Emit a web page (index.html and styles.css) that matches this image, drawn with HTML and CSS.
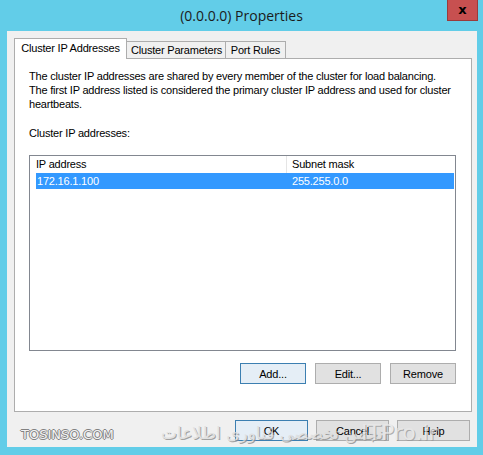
FILE: index.html
```html
<!DOCTYPE html>
<html lang="en">
<head>
    <meta charset="UTF-8">
    <title>(0.0.0.0) Properties</title>
    <link rel="stylesheet" href="styles.css">
</head>
<body>
    <div class="window">
        <!-- Titelbalk -->
        <div class="titlebar">
            <span></span>
            <div class="title">(0.0.0.0) Properties</div>
            <button class="close-btn">x</button>
        </div>

        <div class="client">
            <!-- Tabs -->
            <div class="tabs">
                <div class="tab active">Cluster IP Addresses</div>
                <div class="tab">Cluster Parameters</div>
                <div class="tab">Port Rules</div>
            </div>

            <div class="panel">
                <p class="intro">The cluster IP addresses are shared by every member of the cluster for load balancing.<br>
                    The first IP address listed is considered the primary cluster IP address and used for cluster<br>
                    heartbeats.</p>
                <p class="label">Cluster IP addresses:</p>

                <div class="listview">
                    <div class="list-header">
                        <div class="col col-ip">IP address</div>
                        <div class="col col-mask">Subnet mask</div>
                    </div>
                    <div class="list-row selected">
                        <div class="col col-ip">172.16.1.100</div>
                        <div class="col col-mask">255.255.0.0</div>
                    </div>
                </div>

                <div class="btn-row">
                    <button class="btn focused">Add...</button>
                    <button class="btn">Edit...</button>
                    <button class="btn">Remove</button>
                </div>
            </div>

            <div class="dialog-buttons">
                <button class="btn wide focused">OK</button>
                <button class="btn wide">Cancel</button>
                <button class="btn wide">Help</button>
            </div>

            <!-- Watermerk -->
            <div class="watermark">
                <span class="wm-site">TOSINSO.COM</span>
                <span class="wm-fa" dir="rtl">انجمن تخصصی فناوری اطلاعات</span>
                <span class="wm-itpro">ITPro.ir</span>
            </div>
        </div>
    </div>
</body>
</html>
```

FILE: styles.css
```css
* {
    margin: 0;
    padding: 0;
    box-sizing: border-box;
}

body {
    width: 483px;
    height: 455px;
    overflow: hidden;
    font-family: "Liberation Sans", Arial, sans-serif;
    font-size: 11px;
    letter-spacing: -0.2px;
    color: #000;
}

/* Venster */
.window {
    width: 483px;
    height: 455px;
    background-color: #62cde8;
    display: flex;
    flex-direction: column;
}

.titlebar {
    height: 31px;
    display: grid;
    grid-template-columns: 36px 1fr 36px;
    align-items: start;
}

.title {
    text-align: center;
    font-family: "Open Sans", "Noto Sans", sans-serif;
    font-size: 14px;
    letter-spacing: 0;
    line-height: 32px;
    color: #1b1b1b;
}

.close-btn {
    width: 31px;
    height: 21px;
    background-color: #c75050;
    border: 1px solid #9a3b3b;
    border-top: none;
    color: #000;
    font-family: "DejaVu Sans", sans-serif;
    font-weight: bold;
    font-size: 13px;
    line-height: 18px;
}

/* Client gebied */
.client {
    position: relative;
    flex: 1;
    margin: 0 6px 8px 7px;
    background-color: #f0f0f0;
    padding: 7px 7px 0 7px;
}

.tabs {
    display: flex;
    align-items: flex-end;
    height: 20px;
    position: relative;
    z-index: 2;
}

.tab {
    height: 17px;
    padding: 0 4px;
    border: 1px solid #adadad;
    border-bottom: none;
    border-left: none;
    background-color: #f0f0f0;
    line-height: 16px;
    white-space: nowrap;
    text-align: center;
}

.tab.active {
    height: 21px;
    margin-bottom: -1px;
    padding: 0 6px;
    background-color: #fff;
    border-left: 1px solid #adadad;
    border-color: #adadad;
    line-height: 19px;
    width: 113px;
}

.tab:nth-child(2) {
    width: 99px;
}

.tab:nth-child(3) {
    width: 60px;
}

.panel {
    width: 458px;
    height: 354px;
    background-color: #fff;
    border: 1px solid #adadad;
    padding: 10px 15px 0 14px;
    display: flex;
    flex-direction: column;
}

.intro {
    line-height: 14px;
    white-space: nowrap;
}

.label {
    margin-top: 15px;
    line-height: 14px;
}

/* Lijst */
.listview {
    margin-top: 15px;
    height: 196px;
    flex-shrink: 0;
    border: 1px solid #828790;
    padding: 0 1px 0 1px;
}

.list-header {
    display: flex;
    height: 17px;
    line-height: 17px;
}

.list-header .col-ip {
    border-right: 1px solid #e5e5e5;
}

.list-row {
    display: flex;
    height: 16px;
    line-height: 16px;
    margin-left: 5px;
}

.list-row.selected {
    background-color: #3399ff;
    color: #fff;
}

.col {
    padding-left: 5px;
}

.col-ip {
    width: 256px;
}

.list-row .col-ip {
    width: 251px;
    padding-left: 1px;
}

.col-mask {
    flex: 1;
}

/* Knoppen */
.btn {
    height: 21px;
    width: 66px;
    background-color: #e1e1e1;
    border: 1px solid #adadad;
    font-family: "Liberation Sans", Arial, sans-serif;
    font-size: 11px;
    letter-spacing: -0.2px;
    color: #000;
}

.btn.focused {
    border-color: #3c7fb1;
    background-color: #e5eef6;
}

.btn.wide {
    width: 73px;
}

.btn-row {
    display: flex;
    justify-content: flex-end;
    gap: 9px;
    margin-top: 12px;
}

.dialog-buttons {
    display: flex;
    justify-content: flex-end;
    gap: 8px;
    margin-top: 8px;
}

/* Watermerk over de onderkant */
.watermark {
    position: absolute;
    left: 14px;
    top: 393px;
    width: 450px;
    height: 24px;
    pointer-events: none;
    letter-spacing: 0;
}

.watermark span {
    position: absolute;
    white-space: nowrap;
}

.wm-site {
    left: 0;
    top: 3px;
    font-family: "DejaVu Sans", sans-serif;
    font-size: 13px;
    color: #f4f4f4;
    text-shadow: -1px 0 #666, 1px 0 #666, 0 1px #666, 0 -1px #666;
    opacity: 0.8;
}

.wm-fa {
    left: 140px;
    top: -1px;
    font-family: "DejaVu Sans", sans-serif;
    font-size: 17px;
    color: #ddd;
    text-shadow: 1px 1px #888;
    opacity: 0.75;
}

.wm-itpro {
    left: 340px;
    top: -4px;
    font-family: "DejaVu Sans", sans-serif;
    font-size: 22px;
    color: #e8e8e8;
    text-shadow: 1px 1px #999;
    opacity: 0.75;
}
```
